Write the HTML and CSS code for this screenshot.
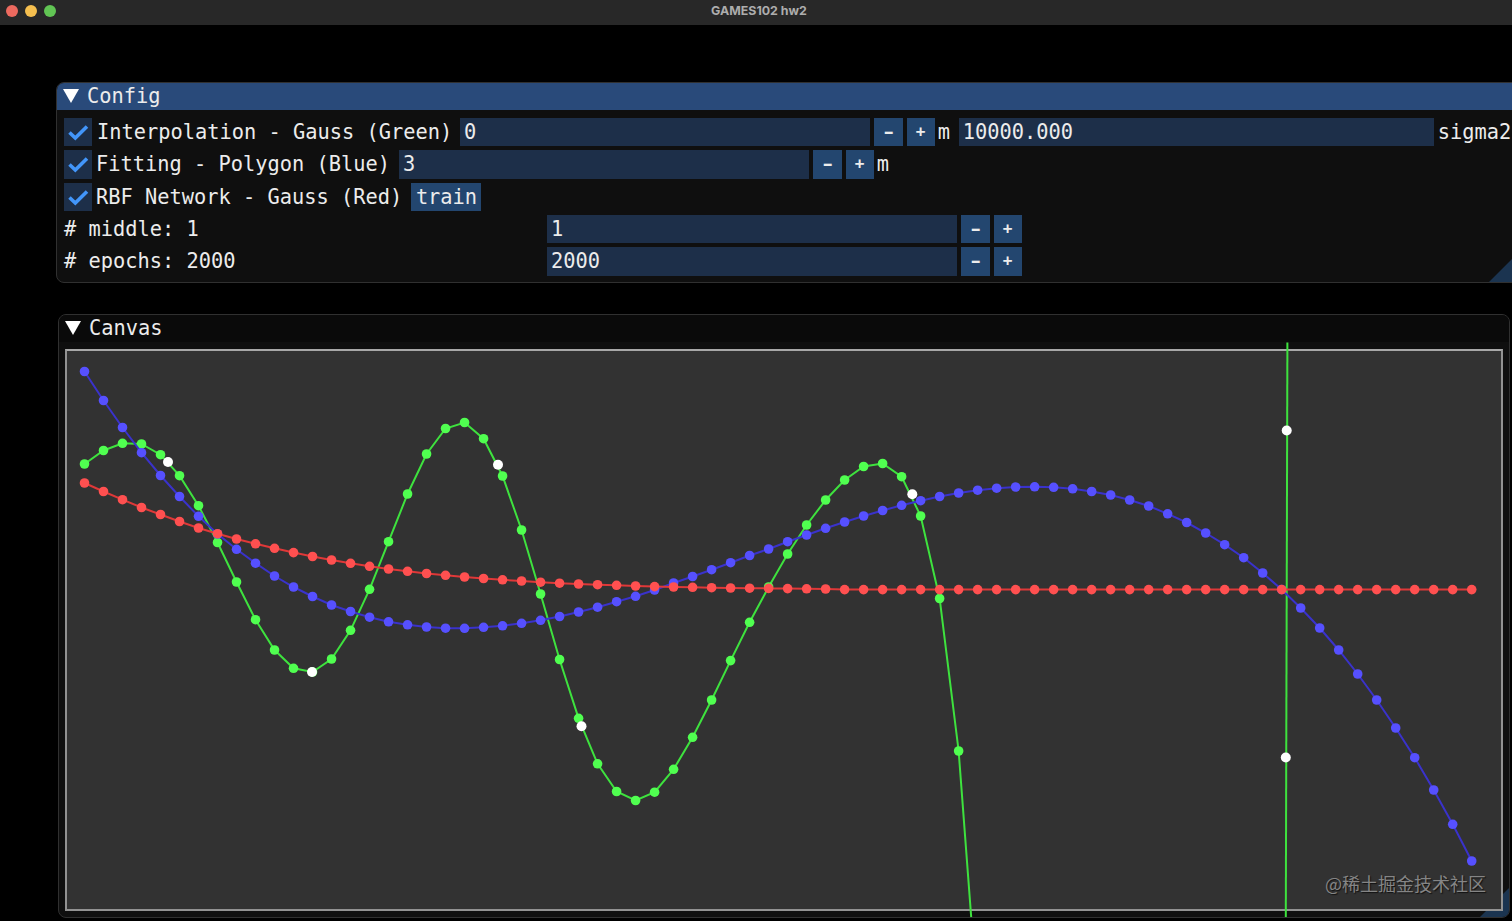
FILE: index.html
```html
<!DOCTYPE html>
<html lang="en">
<head>
<meta charset="utf-8">
<title>GAMES102 hw2</title>
<link rel="stylesheet" href="styles.css">
</head>
<body>
<header class="titlebar">
  <div class="lights"><i class="light close"></i><i class="light minimize"></i><i class="light zoom"></i></div>
  <h1 class="app-title">GAMES102 hw2</h1>
</header>
<main class="desktop">
  <section class="window config">
    <div class="window-title"><svg class="arrow" viewBox="0 0 16 14"><path d="M0 0H16L8 14Z"/></svg><span>Config</span></div>
    <div class="rows">
      <div class="row">
        <span class="check"><svg viewBox="0 0 28 28"><path d="M5.5 14.5L11.3 20L23 8.5"/></svg></span>
        <label class="label interpolation">Interpolation - Gauss (Green)</label>
        <div class="field">0</div>
        <button class="step"><span class="minus">-</span></button><button class="step">+</button>
        <span class="unit wide">m</span>
        <div class="field sigma">10000.000</div>
        <span class="unit sigma-label">sigma2</span>
      </div>
      <div class="row">
        <span class="check"><svg viewBox="0 0 28 28"><path d="M5.5 14.5L11.3 20L23 8.5"/></svg></span>
        <label class="label fitting">Fitting - Polygon (Blue)</label>
        <div class="field">3</div>
        <button class="step"><span class="minus">-</span></button><button class="step">+</button>
        <span class="unit">m</span>
      </div>
      <div class="row">
        <span class="check"><svg viewBox="0 0 28 28"><path d="M5.5 14.5L11.3 20L23 8.5"/></svg></span>
        <label class="label network">RBF Network - Gauss (Red)</label>
        <button class="train">train</button>
      </div>
      <div class="row">
        <span class="param"># middle: 1</span>
        <div class="field">1</div>
        <button class="step"><span class="minus">-</span></button><button class="step">+</button>
      </div>
      <div class="row">
        <span class="param"># epochs: 2000</span>
        <div class="field">2000</div>
        <button class="step"><span class="minus">-</span></button><button class="step">+</button>
      </div>
    </div>
    <i class="grip"></i>
  </section>
  <section class="window canvas">
    <div class="window-title"><svg class="arrow" viewBox="0 0 16 14"><path d="M0 0H16L8 14Z"/></svg><span>Canvas</span></div>
    <i class="grip"></i>
    <div class="surface"></div>
    <svg class="plot" id="plot" viewBox="58 314 1452 604"></svg>
    <span class="watermark">@稀土掘金技术社区</span>
  </section>
</main>
<script src="plot.js"></script>
</body>
</html>
```
FILE: styles.css
```css
* { box-sizing: border-box; }

body {
  margin: 0;
  width: 1512px;
  height: 921px;
  overflow: hidden;
  background: #000;
  color: #ececec;
  font: 20.35px/28px "DejaVu Sans Mono", "Liberation Mono", monospace;
}

.titlebar {
  display: grid;
  grid-template-columns: 56px 1fr 50px;
  align-items: center;
  height: 25px;
  padding-bottom: 3px;
  background: #282828;
}

.lights { display: flex; gap: 7px; padding-left: 6px; }
.light { flex: none; width: 12px; height: 12px; border-radius: 50%; }
.close { background: #ed6a5f; }
.minimize { background: #f5bf4f; }
.zoom { background: #61c554; }

.app-title {
  margin: 0;
  color: #adadad;
  font: bold 12.4px/22px Inter, "Liberation Sans", sans-serif;
  text-align: center;
}

.desktop { display: flex; flex-direction: column; gap: 31px; padding: 57px 0 0 56px; }

.window {
  position: relative;
  flex: none;
  border: 1px solid #303030;
  border-radius: 8px;
  background: #0f0f0f;
  overflow: hidden;
}
.config { width: 1480px; height: 201px; }
.canvas { width: 1452px; height: 604px; margin-left: 2px; }

.window-title {
  display: flex;
  align-items: center;
  gap: 8px;
  height: 27px;
  padding: 0 0 2px 6px;
  white-space: nowrap;
}
.config .window-title { background: #294a7a; }
.canvas .window-title { background: #0a0a0a; }
.arrow { width: 16px; height: 14px; fill: #fff; }

.rows {
  display: grid;
  grid-auto-rows: 28.4px;
  gap: 3.9px;
  padding: 8px 0 0 7px;
}
.row { display: flex; align-items: stretch; white-space: pre; }

.check { flex: none; width: 28px; margin-right: 5px; background: #1d2f49; }
.check svg { display: block; width: 28px; height: 28px; }
.check path { fill: none; stroke: #4296fa; stroke-width: 3.6; }

.label { flex: none; }
.interpolation { width: 363px; }
.fitting { width: 303px; margin-left: -1px; }
.network { width: 315px; margin-left: -1px; }
.param { flex: none; width: 483px; }

.field { flex: none; width: 410px; padding-left: 4px; margin-right: 4.4px; background: #1d2f49; }
.sigma { width: 475px; margin-right: 4px; }

.step, .train {
  flex: none;
  padding: 0;
  border: 0;
  background: #23466f;
  color: #ececec;
  font: inherit;
}
.step { width: 28.2px; margin-right: 4px; font-size: 16px; font-weight: bold; }
.minus { display: inline-block; transform: scaleX(1.6); }
.train { width: 70px; padding-left: 1px; }

.unit { margin-left: -1px; }
.wide { flex: none; width: 21px; }
.sigma-label { margin-left: 0; }

.grip {
  position: absolute;
  right: 0;
  bottom: 0;
  width: 29px;
  height: 29px;
  background: #1b3450;
  clip-path: polygon(100% 0, 100% 100%, 0 100%);
}
.config .grip { width: 46px; height: 46px; }

.surface {
  position: relative;
  width: 1438px;
  height: 562px;
  margin: 7px 0 0 6px;
  border: 2px solid #929292;
  border-top-color: #a8a8a8;
  background: #323232;
}

.plot { position: absolute; left: -1px; top: -1px; width: 1452px; height: 604px; }
.plot polyline { fill: none; stroke-width: 2; }
.green polyline { stroke: #3ee23e; }
.green circle { fill: #50ff50; }
.blue polyline { stroke: #3a32cb; }
.blue circle { fill: #5650ff; }
.red polyline { stroke: #df3838; }
.red circle { fill: #ff5050; }
.points circle { fill: #fff; }

.watermark {
  position: absolute;
  right: 23px;
  bottom: 20px;
  color: #858585;
  font: 18px/28px "Noto Sans CJK SC", sans-serif;
  text-shadow: 1px 1px 1px #111;
}
```
FILE: plot.js
```js
const ORIGIN = 84.5;
const STEP = 19.003;
const NS = "http://www.w3.org/2000/svg";

const green = [464,450.5,443.3,444,454.7,475.7,505.7,542.5,582,619.7,650,668.3,672,659,630.3,589.3,541.7,494,454,428.5,
  422.5,438.7,476,530,594,659.5,718.3,763.8,791.5,800.5,792.2,769.3,737.3,700,660.6,622.3,587,554,525,500,
  480,466.5,463.5,476.7,516,598.5,751];
const blue = [371.5,400.5,427.5,452.7,475.5,496.5,516.3,534,549.3,563.2,576,587,596.5,605,611.5,617.2,621.8,624.8,627,628.2,
  628.3,627.3,625.8,623.3,620.3,616.5,612,607.2,601.7,596.3,590,583,576.5,569.7,562.7,555.5,549,541.7,535,528.3,
  522,516,510.5,505.3,500.7,496.5,493,490.2,488.2,487,486.8,487.3,488.8,491.5,495,500,506,513.8,522.5,533,
  544.7,557.7,573,589.5,608,628,650,674,700,728,757.7,790,824.3,861];
const red = [483,491.5,499.7,507.5,514.5,521.5,528,533.7,539,543.8,548.3,552.6,556.5,560,563.3,566.3,569,571.3,573.5,575.3,
  577,578.5,579.8,581,582.2,583.2,584,584.7,585.3,586,586.6,587,587.3,587.7,588,588.2,588.4,588.6,588.8,589];
while (red.length < 74) red.push(589.6);

const points = [[168,462],[312,672],[498,464.7],[581.5,726.2],[912.3,494.2],[1286.7,430.5],[1285.8,757.5]];

function add(parent, tag, attrs) {
  const el = document.createElementNS(NS, tag);
  for (const key in attrs) el.setAttribute(key, attrs[key]);
  parent.appendChild(el);
  return el;
}

function drawSeries(name, values, extraLines) {
  const group = add(document.getElementById("plot"), "g", { class: name });
  const dots = values.map((y, i) => [ORIGIN + STEP * i, y]);
  const lines = extraLines || [[]];
  add(group, "polyline", { points: dots.concat(lines[0]).join(" ") });
  lines.slice(1).forEach(line => add(group, "polyline", { points: line.join(" ") }));
  dots.forEach(([cx, cy]) => add(group, "circle", { cx, cy, r: 4.8 }));
}

drawSeries("green", green, [[[971.2, 917]], [[1287.4, 342.5], [1285.8, 917]]]);
drawSeries("blue", blue);
drawSeries("red", red);
const group = add(document.getElementById("plot"), "g", { class: "points" });
points.forEach(([cx, cy]) => add(group, "circle", { cx, cy, r: 5 }));
```
